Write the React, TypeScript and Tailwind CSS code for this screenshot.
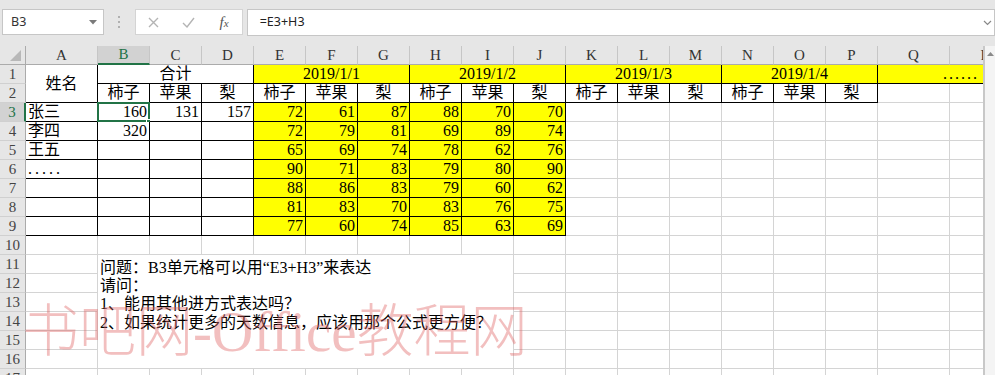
import React from 'react';
import clsx from 'clsx';

const COLS = ['A', 'B', 'C', 'D', 'E', 'F', 'G', 'H', 'I', 'J', 'K', 'L', 'M', 'N', 'O', 'P', 'Q', 'R'];
const FRUITS = ['柿子', '苹果', '梨'];
const DATA = [
  [72, 61, 87, 88, 70, 70],
  [72, 79, 81, 69, 89, 74],
  [65, 69, 74, 78, 62, 76],
  [90, 71, 83, 79, 80, 90],
  [88, 86, 83, 79, 60, 62],
  [81, 83, 70, 83, 76, 75],
  [77, 60, 74, 85, 63, 69],
];
const NOTE = [
  '问题：B3单元格可以用“E3+H3”来表达',
  '请问：',
  '1、能用其他进方式表达吗？',
  '2、如果统计更多的天数信息，应该用那个公式更方便？',
];
const ROWS = 17;

type Cell = {
  t?: React.ReactNode;
  align?: 'l' | 'c' | 'r';
  y?: boolean;
  cs?: number;
  rs?: number;
  cls?: string;
  sel?: boolean;
};

function buildCells() {
  const cells: Record<string, Cell> = {};
  const set = (r: number, c: number, cell: Cell) => (cells[`${r}-${c}`] = cell);

  set(1, 1, { t: '姓名', align: 'c', rs: 2 });
  set(1, 2, { t: '合计', align: 'c', cs: 3 });
  ['2019/1/1', '2019/1/2', '2019/1/3', '2019/1/4'].forEach((d, i) =>
    set(1, 5 + i * 3, { t: d, align: 'c', cs: 3, y: true })
  );
  set(1, 17, { t: '......', align: 'r', cs: 2, y: true, cls: 'items-center pr-[42px] tracking-[2px]' });
  for (let c = 2; c <= 16; c++) set(2, c, { t: FRUITS[(c - 2) % 3], align: 'c', cls: 'items-end' });

  set(3, 1, { t: '张三' });
  set(4, 1, { t: '李四' });
  set(5, 1, { t: '王五' });
  set(6, 1, { t: '.....', cls: 'items-center tracking-[3px]' });

  set(3, 2, { t: '160', align: 'r', sel: true });
  set(3, 3, { t: '131', align: 'r' });
  set(3, 4, { t: '157', align: 'r' });
  set(4, 2, { t: '320', align: 'r' });

  DATA.forEach((row, i) =>
    row.forEach((v, j) => set(3 + i, 5 + j, { t: String(v), align: 'r', y: true }))
  );

  // B11:I16 merged note
  set(11, 2, {
    cs: 8,
    rs: 6,
    t: (
      <div className="flex flex-col pt-[4px] leading-[18.2px]">
        {NOTE.map((line) => (
          <span key={line}>{line}</span>
        ))}
      </div>
    ),
    cls: 'items-start',
  });
  return cells;
}

function isBlack(r: number, c: number) {
  if (c === 1 && r >= 1 && r <= 9) return true;
  if (r === 1 && c >= 2 && c <= 18) return true;
  if (r === 2 && c >= 2 && c <= 16) return true;
  if (r >= 3 && r <= 9 && c >= 2 && c <= 10) return true;
  return false;
}

const FormulaBar: React.FC = () => (
  <div className="h-[46px] bg-[#e6e6e6] flex items-start pt-[9px] overflow-hidden font-['Noto_Sans',sans-serif]">
    <div className="ml-[2px] w-[102px] h-[26px] bg-white border border-[#c6c6c6] flex items-center justify-between pl-[8px] pr-[6px]">
      <span className="text-[12.5px] text-[#333]">B3</span>
      <svg width="8" height="5" viewBox="0 0 8 5">
        <path d="M0 0 L8 0 L4 4.5 Z" fill="#7a7a7a" />
      </svg>
    </div>
    <div className="w-[31px] h-[26px] flex flex-col items-center justify-center gap-[3px]">
      <span className="w-[2px] h-[2px] bg-[#b0b0b0]" />
      <span className="w-[2px] h-[2px] bg-[#b0b0b0]" />
      <span className="w-[2px] h-[2px] bg-[#b0b0b0]" />
    </div>
    <div className="w-[108px] h-[26px] bg-white border border-[#d4d4d4] flex items-center">
      <div className="w-[36px] flex justify-center">
        <svg width="11" height="11" viewBox="0 0 11 11">
          <path d="M1 1 L10 10 M10 1 L1 10" stroke="#b4b4b4" strokeWidth="1.4" />
        </svg>
      </div>
      <div className="w-[36px] flex justify-center">
        <svg width="13" height="11" viewBox="0 0 13 11">
          <path d="M1 6 L5 10 L12 1" stroke="#b4b4b4" strokeWidth="1.4" fill="none" />
        </svg>
      </div>
      <div className="w-[36px] flex justify-center">
        <span className="italic font-['Liberation_Serif',serif] text-[15px] text-[#555] leading-none">
          f<span className="text-[11px]">x</span>
        </span>
      </div>
    </div>
    <div className="ml-[4px] w-[750px] h-[27px] bg-white border border-[#c6c6c6] flex items-center justify-between pl-[12px] pr-[2px]">
      <span className="text-[12.5px] text-[#222]">=E3+H3</span>
      <svg width="9" height="6" viewBox="0 0 9 6">
        <path d="M1 1 L4.5 4.5 L8 1" stroke="#888" strokeWidth="1.2" fill="none" />
      </svg>
    </div>
  </div>
);

const Sheet: React.FC = () => {
  const cells = buildCells();
  const covered = new Set<string>();
  Object.entries(cells).forEach(([k, cell]) => {
    const [r, c] = k.split('-').map(Number);
    for (let i = 0; i < (cell.rs ?? 1); i++)
      for (let j = 0; j < (cell.cs ?? 1); j++)
        if (i || j) covered.add(`${r + i}-${c + j}`);
  });

  const items: React.ReactNode[] = [];

  // column header row
  items.push(
    <div key="corner" className="bg-[#e6e6e6] border-r border-b border-[#ababab] flex items-end justify-end pr-[4px] pb-[3px]">
      <svg width="11" height="11" viewBox="0 0 11 11">
        <path d="M11 0 L11 11 L0 11 Z" fill="#b8b8b8" />
      </svg>
    </div>
  );
  COLS.forEach((col, i) => {
    const sel = i === 1;
    items.push(
      <div
        key={`h-${col}`}
        className={clsx(
          'flex items-center justify-center border-r border-r-[#c6c6c6] text-[15px]',
          sel ? 'bg-[#d2d2d2] border-b-2 border-b-[#217346] text-[#217346]' : 'bg-[#e6e6e6] border-b border-b-[#ababab] text-[#333]'
        )}
      >
        {col}
      </div>
    );
  });

  for (let r = 1; r <= ROWS; r++) {
    const sel = r === 3;
    items.push(
      <div
        key={`r-${r}`}
        className={clsx(
          'flex items-center justify-center border-b border-b-[#d0d0d0] text-[15px]',
          sel ? 'bg-[#d2d2d2] border-r-2 border-r-[#217346] text-[#217346]' : 'bg-[#e6e6e6] border-r border-r-[#ababab] text-[#444]'
        )}
      >
        {r}
      </div>
    );
    for (let c = 1; c <= COLS.length; c++) {
      const key = `${r}-${c}`;
      if (covered.has(key)) continue;
      const cell = cells[key] ?? {};
      const cs = cell.cs ?? 1;
      const rs = cell.rs ?? 1;
      const rightBlack = isBlack(r, c) || isBlack(r, c + cs);
      const bottomBlack = isBlack(r, c) || isBlack(r + rs, c);
      const align = cell.align ?? 'l';
      items.push(
        <div
          key={key}
          className={clsx(
            'relative flex border-r border-b whitespace-nowrap leading-[18px] text-black',
            cell.cls ?? 'items-center',
            rightBlack ? 'border-r-black' : 'border-r-[#d4d4d4]',
            bottomBlack ? 'border-b-black' : 'border-b-[#d4d4d4]',
            cell.y ? 'bg-[#ffff00]' : 'bg-white',
            align === 'r' && 'justify-end pr-[2px]',
            align === 'c' && 'justify-center',
            align === 'l' && 'justify-start pl-[2px]',
            cs === 2 && 'col-span-2',
            cs === 3 && 'col-span-3',
            cs === 8 && 'col-span-8',
            rs === 2 && 'row-span-2',
            rs === 6 && 'row-span-6'
          )}
        >
          {cell.t}
          {cell.sel && (
            <>
              <div className="absolute -left-[1px] -top-[1px] -right-[1px] -bottom-[1px] border-2 border-[#217346] pointer-events-none" />
              <div className="absolute -right-[3px] -bottom-[4px] w-[6px] h-[6px] bg-[#217346] border border-white" />
            </>
          )}
        </div>
      );
    }
  }

  return (
    <div className="w-[983px] overflow-hidden">
      <div className="grid grid-cols-[26px_72px_repeat(15,52px)_72px_72px] grid-rows-[repeat(18,19px)] w-max text-[16px] font-['Liberation_Serif','Noto_Sans_CJK_SC',serif]">
        {items}
      </div>
    </div>
  );
};

export default function App() {
  return (
    <div className="relative w-[995px] h-[375px] overflow-hidden bg-white">
      <FormulaBar />
      <div className="flex">
        <Sheet />
        <div className="w-[12px] h-[329px] bg-[#f4f4f4] border-l-2 border-[#c8c8c8] flex justify-center pt-[6px]">
          <svg width="7" height="4" viewBox="0 0 7 4">
            <path d="M0 4 L3.5 0 L7 4 Z" fill="#8a8a8a" />
          </svg>
        </div>
      </div>
      <div className="absolute left-[22px] top-[303px] whitespace-nowrap leading-none text-[57px] font-light text-[#e06060] opacity-40 pointer-events-none font-['Liberation_Serif','Noto_Sans_CJK_SC',serif]">
        书吧网-Office教程网
      </div>
    </div>
  );
}
